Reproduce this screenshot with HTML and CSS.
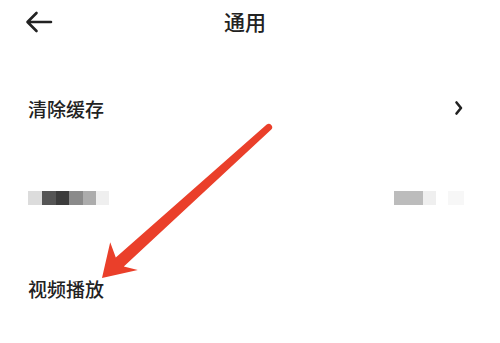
FILE: index.html
```html
<!DOCTYPE html>
<html lang="zh">
<head>
<meta charset="utf-8">
<title>通用</title>
<link rel="stylesheet" href="styles.css">
</head>
<body>
<div class="page">
  <header class="header">
    <div class="back">
      <svg width="28" height="22" viewBox="0 0 28 22" aria-hidden="true">
        <path d="M26 11 H3 M11.5 2 L2.5 11 L11.5 20" fill="none" stroke="#222" stroke-width="2.6" stroke-linecap="round" stroke-linejoin="round"/>
      </svg>
    </div>
    <div class="title">通用</div>
    <div></div>
  </header>
  <div class="row">
    <span class="label">清除缓存</span>
    <svg class="chev" width="10" height="16" viewBox="0 0 10 16" aria-hidden="true">
      <path d="M2.5 2.5 L7 8 L2.5 13.5" fill="none" stroke="#222" stroke-width="2.6" stroke-linecap="round" stroke-linejoin="round"/>
    </svg>
  </div>
  <div class="row">
    <div class="blur">
      <i class="b w14 c1"></i><i class="b w14 c2"></i><i class="b w13 c3"></i><i class="b w14 c4"></i><i class="b w13 c5"></i><i class="b w13 c6"></i>
    </div>
    <div class="blur">
      <i class="b w29 c7"></i><i class="b w13 c6"></i><i class="b w12 c0"></i><i class="b w16 c8"></i>
    </div>
  </div>
  <div class="row">
    <span class="label">视频播放</span>
  </div>
  <svg class="annot" width="500" height="343" viewBox="0 0 500 343" aria-hidden="true">
    <path d="M266.7 124.4 L115.8 257.4 L110.2 242.3 L102 278 L137.8 269.9 L123.8 266.4 L271.3 129.6 A3.5 3.5 0 0 0 266.7 124.4 Z" fill="#ea3f2a"/>
  </svg>
</div>
</body>
</html>
```
FILE: styles.css
```css
html, body {
  margin: 0;
  padding: 0;
  background: #fff;
}
.page {
  position: relative;
  width: 500px;
  height: 343px;
  overflow: hidden;
  font-family: "Noto Sans CJK SC", "Noto Sans", sans-serif;
  font-weight: 500;
  color: #222;
}
.header {
  display: grid;
  grid-template-columns: 60px 1fr 70px;
  align-items: center;
  height: 43px;
}
.back {
  display: flex;
  align-items: center;
  padding-left: 25px;
  padding-top: 1px;
}
.title {
  text-align: center;
  font-size: 21px;
  line-height: 1;
}
.row {
  display: flex;
  align-items: center;
  justify-content: space-between;
  height: 90px;
  padding: 0 36px 0 28px;
}
.header + .row {
  margin-top: 20px;
}
.label {
  font-size: 19px;
  line-height: 1;
}
.chev {
  display: block;
}
.blur {
  display: flex;
  height: 14px;
  filter: blur(0.6px);
}
.b {
  display: block;
  height: 14px;
}
.w12 { width: 12px; }
.w13 { width: 13px; }
.w14 { width: 14px; }
.w16 { width: 16px; }
.w29 { width: 29px; }
.c0 { background: #fff; }
.c1 { background: #dcdcdc; }
.c2 { background: #555; }
.c3 { background: #3c3c3c; }
.c4 { background: #8a8a8a; }
.c5 { background: #acacac; }
.c6 { background: #efefef; }
.c7 { background: #bcbcbc; }
.c8 { background: #f7f7f7; }
.annot {
  position: absolute;
  left: 0;
  top: 0;
}
```
